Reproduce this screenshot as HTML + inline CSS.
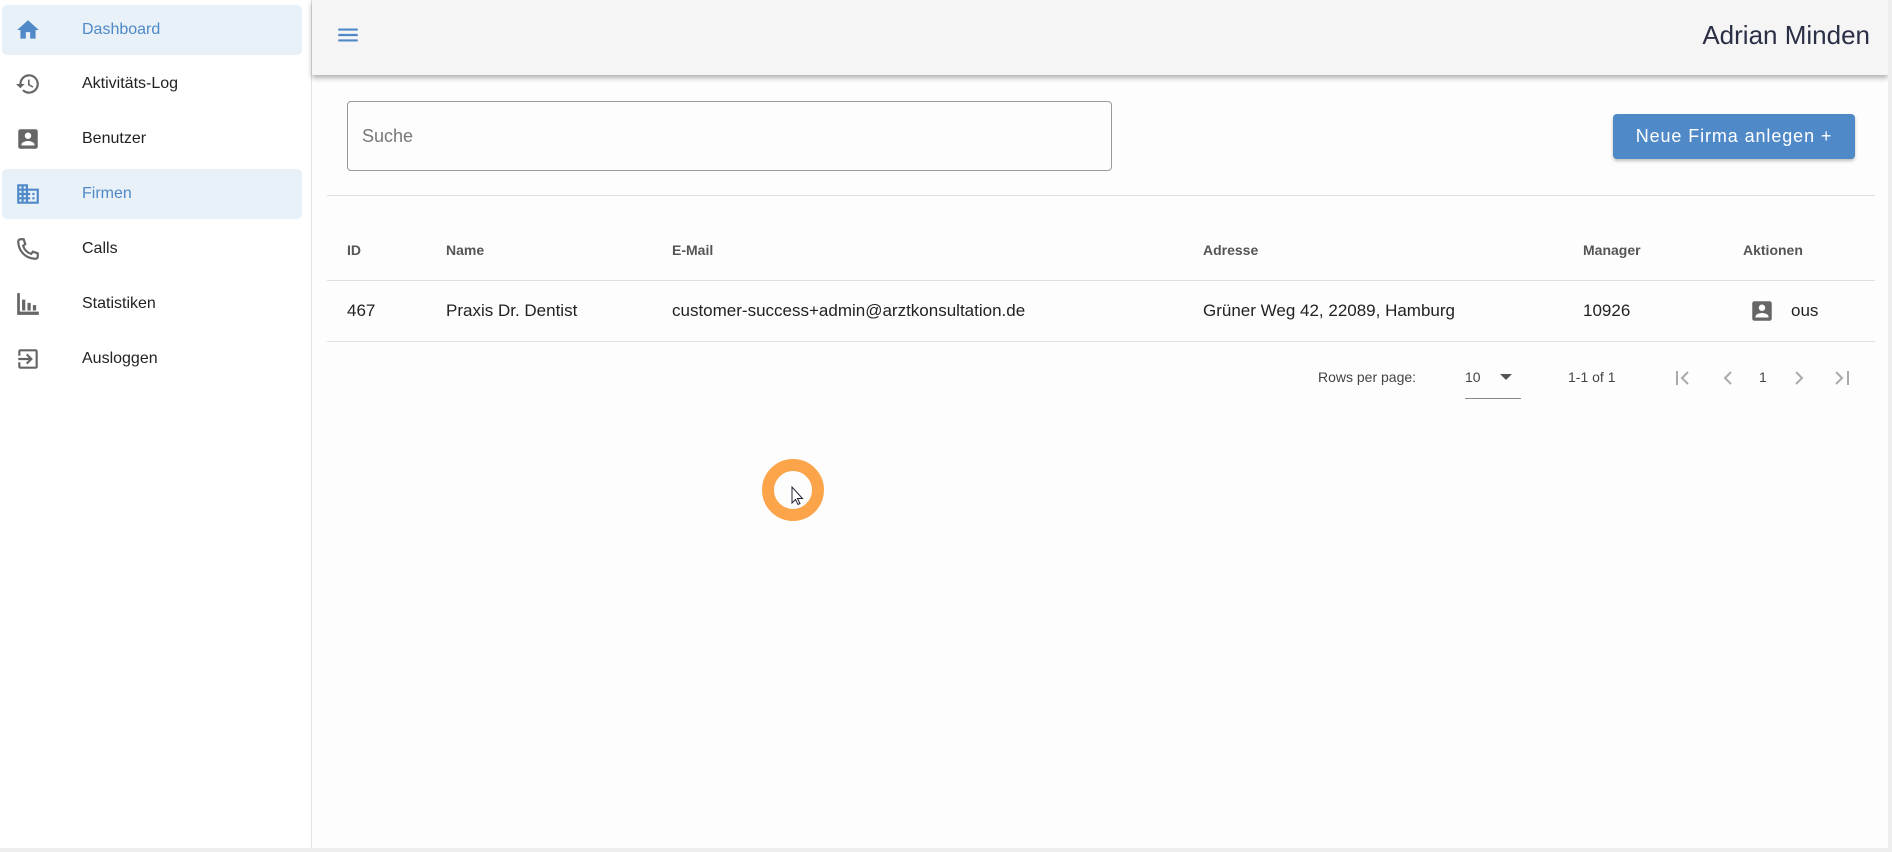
<!DOCTYPE html>
<html><head><meta charset="utf-8"><style>
*{box-sizing:border-box;margin:0;padding:0}
body{width:1892px;height:852px;overflow:hidden;background:#fdfdfd;font-family:"Liberation Sans",Roboto,sans-serif;position:relative}
.abs{position:absolute}
.side{left:0;top:0;width:312px;height:848px;background:#fff;border-right:1px solid #e2e2e2}
.nav{position:absolute;left:2px;width:300px;height:50px;border-radius:5px}
.nav.act{background:#e8f0f8}
.nav svg{position:absolute;left:13px;top:12px;width:26px;height:26px}
.nav span{position:absolute;left:80px;top:16px;font-size:16px;color:#222}
.nav.act span{color:#4f89c7}
.hdr{left:312px;top:0;width:1576px;height:75px;background:#f5f5f5;box-shadow:0 3px 5px rgba(0,0,0,.3)}
.th{position:absolute;top:242px;font-size:14px;font-weight:bold;color:#555}
.td{position:absolute;top:301px;font-size:17px;color:#222}
.hr{position:absolute;left:327px;width:1548px;height:1px;background:#e0e0e0}
.pg{position:absolute;top:369px;font-size:14px;color:#444}
</style></head><body>
<div class="abs side">
 <div class="nav act" style="top:5px"><svg viewBox="0 0 24 24"><path fill="#4f89c7" d="M10 20v-6h4v6h5v-8h3L12 3 2 12h3v8z"/></svg><span>Dashboard</span></div>
 <div class="nav" style="top:59px"><svg viewBox="0 0 24 24"><path fill="#666" d="M13 3a9 9 0 0 0-9 9H1l3.9 3.9L9 12H6a7 7 0 1 1 2.05 4.95l-1.42 1.42A9 9 0 1 0 13 3zm-1 5v5l4.3 2.5.7-1.2-3.5-2.1V8z"/></svg><span>Aktivitäts-Log</span></div>
 <div class="nav" style="top:114px"><svg viewBox="0 0 24 24"><path fill="#666" d="M3 5v14a2 2 0 0 0 2 2h14a2 2 0 0 0 2-2V5a2 2 0 0 0-2-2H5a2 2 0 0 0-2 2zm12 4a3 3 0 1 1-6 0 3 3 0 0 1 6 0zm-9 8c0-2 4-3.1 6-3.1s6 1.1 6 3.1v1H6z"/></svg><span>Benutzer</span></div>
 <div class="nav act" style="top:169px"><svg viewBox="0 0 24 24"><path fill="#4f89c7" d="M12 7V3H2v18h20V7H12zM6 19H4v-2h2v2zm0-4H4v-2h2v2zm0-4H4V9h2v2zm0-4H4V5h2v2zm4 12H8v-2h2v2zm0-4H8v-2h2v2zm0-4H8V9h2v2zm0-4H8V5h2v2zm10 12h-8v-2h2v-2h-2v-2h2v-2h-2V9h8v10zm-2-8h-2v2h2v-2zm0 4h-2v2h2v-2z"/></svg><span>Firmen</span></div>
 <div class="nav" style="top:224px"><svg viewBox="0 0 24 24"><path fill="none" stroke="#666" stroke-width="2" d="M5 3h3l1.5 4.5-2 1.5a11 11 0 0 0 7.5 7.5l1.5-2 4.5 1.5v3a2 2 0 0 1-2 2C10 21 3 14 3 5a2 2 0 0 1 2-2z"/></svg><span>Calls</span></div>
 <div class="nav" style="top:279px"><svg viewBox="0 0 24 24"><path fill="#666" d="M2 2h2.5v17H22v3H2zM6.5 8h3v10h-3zM11.5 11h3v7h-3zM16.5 13h3v5h-3z"/></svg><span>Statistiken</span></div>
 <div class="nav" style="top:334px"><svg viewBox="0 0 24 24"><path fill="#666" d="M10.09 15.59L11.5 17l5-5-5-5-1.41 1.41L12.67 11H3v2h9.67l-2.58 2.59zM19 3H5a2 2 0 0 0-2 2v4h2V5h14v14H5v-4H3v4a2 2 0 0 0 2 2h14a2 2 0 0 0 2-2V5a2 2 0 0 0-2-2z"/></svg><span>Ausloggen</span></div>
</div>
<div class="abs hdr">
 <svg class="abs" style="left:23px;top:22px" width="26" height="26" viewBox="0 0 24 24"><path fill="#4f89c7" d="M3 18h18v-2H3v2zm0-5h18v-2H3v2zm0-7v2h18V6H3z"/></svg>
 <div class="abs" style="right:18px;top:20px;font-size:26px;color:#2a2f45">Adrian Minden</div>
</div>
<div class="abs" style="left:347px;top:101px;width:765px;height:70px;border:1px solid #9a9a9a;border-radius:4px"><span class="abs" style="left:14px;top:24px;font-size:18px;color:#777">Suche</span></div>
<div class="abs" style="left:1613px;top:114px;width:242px;height:45px;background:#4f89c7;border-radius:4px;box-shadow:0 2px 3px rgba(0,0,0,.25);color:#fff;font-size:18px;text-align:center;line-height:45px;letter-spacing:.9px">Neue Firma anlegen +</div>
<div class="hr" style="top:195px"></div>
<div class="th" style="left:347px">ID</div>
<div class="th" style="left:446px">Name</div>
<div class="th" style="left:672px">E-Mail</div>
<div class="th" style="left:1203px">Adresse</div>
<div class="th" style="left:1583px">Manager</div>
<div class="th" style="left:1743px">Aktionen</div>
<div class="hr" style="top:280px"></div>
<div class="td" style="left:347px">467</div>
<div class="td" style="left:446px">Praxis Dr. Dentist</div>
<div class="td" style="left:672px">customer-success+admin@arztkonsultation.de</div>
<div class="td" style="left:1203px">Grüner Weg 42, 22089, Hamburg</div>
<div class="td" style="left:1583px">10926</div>
<svg class="abs" style="left:1749px;top:298px" width="26" height="26" viewBox="0 0 24 24"><path fill="#666" d="M3 5v14a2 2 0 0 0 2 2h14a2 2 0 0 0 2-2V5a2 2 0 0 0-2-2H5a2 2 0 0 0-2 2zm12 4a3 3 0 1 1-6 0 3 3 0 0 1 6 0zm-9 8c0-2 4-3.1 6-3.1s6 1.1 6 3.1v1H6z"/></svg>
<div class="td" style="left:1791px">ous</div>
<div class="hr" style="top:341px"></div>
<div class="pg" style="left:1318px">Rows per page:</div>
<div class="pg" style="left:1465px">10</div>
<svg class="abs" style="left:1499px;top:372px" width="16" height="10"><path d="M1 2h12l-6 6z" fill="#555"/></svg>
<div class="abs" style="left:1465px;top:398px;width:56px;height:1px;background:#888"></div>
<div class="pg" style="left:1568px">1-1 of 1</div>
<svg class="abs" style="left:1660px;top:366px" width="200" height="24" viewBox="0 0 200 24" fill="none" stroke="#aaa" stroke-width="2"><path d="M17 5v14M28 6l-6 6 6 6"/><path d="M71 6l-6 6 6 6"/><path d="M136 6l6 6-6 6"/><path d="M176 6l6 6-6 6M188 5v14"/></svg>
<div class="pg" style="left:1759px">1</div>
<svg class="abs" style="left:762px;top:459px" width="62" height="62"><circle cx="31" cy="31" r="25" fill="none" stroke="#fba44a" stroke-width="12"/><path d="M30 28v16l3.5-3.5 2.5 5 2-1-2.5-5h5z" fill="#fff" stroke="#223" stroke-width="1"/></svg>
<div class="abs" style="left:0;top:848px;width:1892px;height:4px;background:#eee"></div>
<div class="abs" style="left:1888px;top:0;width:4px;height:848px;background:#eee"></div>
</body></html>
